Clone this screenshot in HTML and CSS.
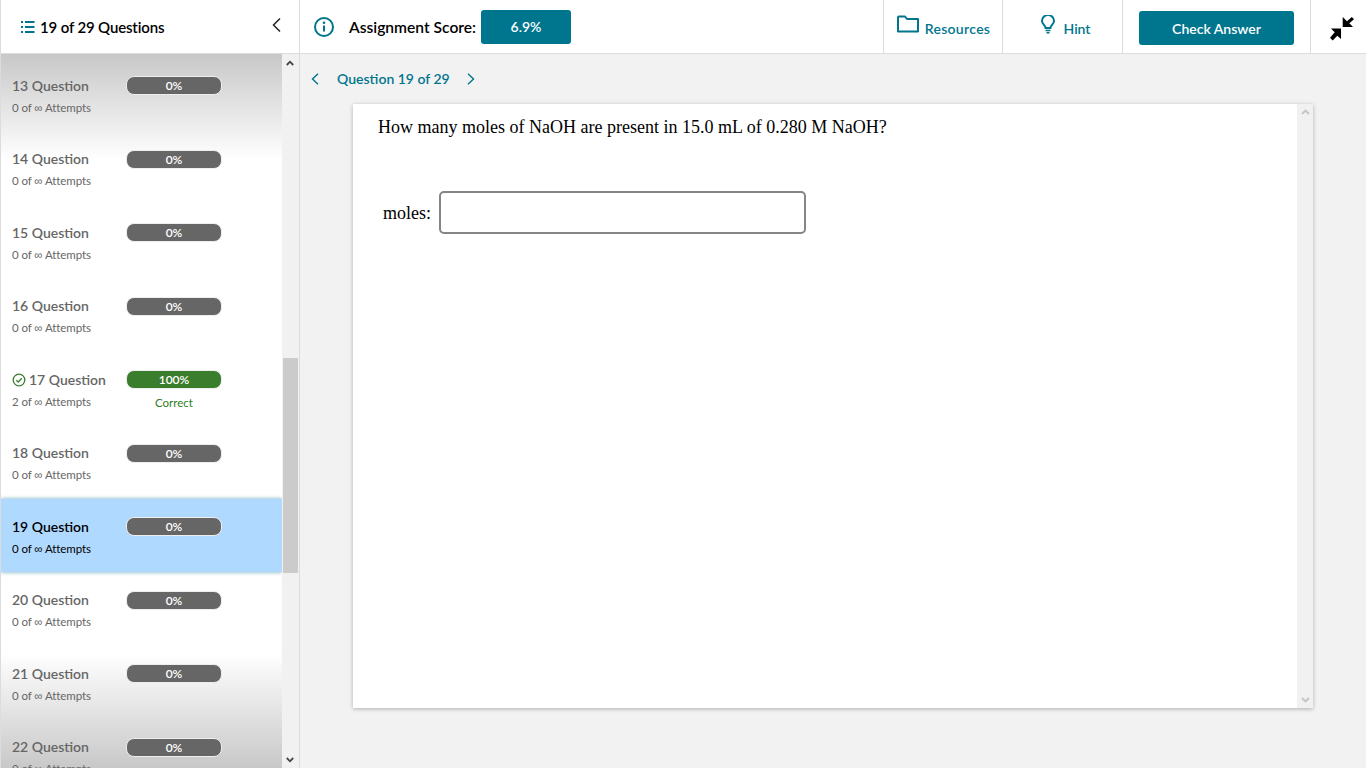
FILE: index.html
```html
<!DOCTYPE html>
<html lang="en">
<head>
<meta charset="utf-8">
<title>Question 19 of 29</title>
<link rel="stylesheet" href="styles.css">
</head>
<body>
<header class="topbar">
  <div class="head-left">
    <svg class="list-icon" width="14" height="12" viewBox="0 0 14 12"><path d="M0 1h2M4 1h9.500M0 6h2M4 6h9.500M0 11h2M4 11h9.500" stroke="#00758e" stroke-width="1.800" fill="none"/></svg>
    <span class="head-title">19 of 29 Questions</span>
    <svg class="collapse" width="10" height="16" viewBox="0 0 10 16"><path d="M8 1.500 1.500 8 8 14.500" stroke="#222" stroke-width="1.500" fill="none"/></svg>
  </div>
  <div class="head-score">
    <svg class="info" width="20" height="20" viewBox="0 0 20 20"><circle cx="10" cy="10" r="9" stroke="#00758e" stroke-width="2" fill="none"/><path d="M10 8.500v6" stroke="#00758e" stroke-width="2"/><circle cx="10" cy="5.700" r="1.300" fill="#00758e"/></svg>
    <span class="score-label">Assignment Score:</span>
    <span class="score-badge">6.9%</span>
  </div>
  <div class="head-tool tool-res">
    <svg width="22" height="18" viewBox="0 0 22 18"><path d="M1 16.500V2.500q0-1 1-1h6l2 2.500h11v12.500z" stroke="#00758e" stroke-width="2" fill="none" stroke-linejoin="round"/></svg>
    <span class="res-label">Resources</span>
  </div>
  <div class="head-tool tool-hint">
    <svg width="14" height="19" viewBox="0 0 14 19"><path d="M4.600 13c0-2.500-3.600-3.800-3.600-7a6 6 0 0 1 12 0c0 3.200-3.600 4.500-3.600 7z" stroke="#00758e" stroke-width="2" fill="none"/><path d="M4.500 15.500h5M5.500 17.800h3" stroke="#00758e" stroke-width="1.500"/></svg>
    <span>Hint</span>
  </div>
  <div class="head-check"><button class="check-btn">Check Answer</button></div>
  <div class="head-expand">
    <svg width="24" height="24" viewBox="0 0 24 24"><path d="M12.700 0v10H23l-3.700-3.700L24 2.200 21.800 0 17 4.300z" fill="#000"/><path d="M11 11.500H1l3.700 3.700L0 20.800 2.700 23.500 7.300 18.800 11 22z" fill="#000"/></svg>
  </div>
</header>
<div class="body">
  <aside class="sidebar">
    <div class="list">
      <div class="row"><div class="info-col"><div class="q">13 Question</div><div class="att">0 of <span class="inf">∞</span> Attempts</div></div><div class="bar-col"><div class="bar">0%</div></div></div>
      <div class="row"><div class="info-col"><div class="q">14 Question</div><div class="att">0 of <span class="inf">∞</span> Attempts</div></div><div class="bar-col"><div class="bar">0%</div></div></div>
      <div class="row"><div class="info-col"><div class="q">15 Question</div><div class="att">0 of <span class="inf">∞</span> Attempts</div></div><div class="bar-col"><div class="bar">0%</div></div></div>
      <div class="row"><div class="info-col"><div class="q">16 Question</div><div class="att">0 of <span class="inf">∞</span> Attempts</div></div><div class="bar-col"><div class="bar">0%</div></div></div>
      <div class="row"><div class="info-col"><div class="q"><svg class="tick" width="14" height="14" viewBox="0 0 14 14"><circle cx="7" cy="7" r="5.800" stroke="#3a7d2c" stroke-width="1.300" fill="none"/><path d="M4.300 7.200 6.200 9 9.800 5.300" stroke="#3a7d2c" stroke-width="1.300" fill="none"/></svg>17 Question</div><div class="att">2 of <span class="inf">∞</span> Attempts</div></div><div class="bar-col"><div class="bar bar-ok">100%</div><div class="correct">Correct</div></div></div>
      <div class="row"><div class="info-col"><div class="q">18 Question</div><div class="att">0 of <span class="inf">∞</span> Attempts</div></div><div class="bar-col"><div class="bar">0%</div></div></div>
      <div class="row row-active"><div class="info-col"><div class="q">19 Question</div><div class="att">0 of <span class="inf">∞</span> Attempts</div></div><div class="bar-col"><div class="bar">0%</div></div></div>
      <div class="row"><div class="info-col"><div class="q">20 Question</div><div class="att">0 of <span class="inf">∞</span> Attempts</div></div><div class="bar-col"><div class="bar">0%</div></div></div>
      <div class="row"><div class="info-col"><div class="q">21 Question</div><div class="att">0 of <span class="inf">∞</span> Attempts</div></div><div class="bar-col"><div class="bar">0%</div></div></div>
      <div class="row"><div class="info-col"><div class="q">22 Question</div><div class="att">0 of <span class="inf">∞</span> Attempts</div></div><div class="bar-col"><div class="bar">0%</div></div></div>
    </div>
    <div class="scroll">
      <svg class="arrow-up" width="8" height="6" viewBox="0 0 8 6"><path d="M.8 5 4 1.700 7.200 5" stroke="#444" stroke-width="1.800" fill="none"/></svg>
      <div class="thumb"></div>
      <svg class="arrow-down" width="8" height="6" viewBox="0 0 8 6"><path d="M.8 1 4 4.300 7.200 1" stroke="#444" stroke-width="1.800" fill="none"/></svg>
    </div>
  </aside>
  <main class="main">
    <nav class="qnav">
      <svg width="8" height="12" viewBox="0 0 8 12"><path d="M7 .8 1.500 6 7 11.200" stroke="#00758e" stroke-width="1.400" fill="none"/></svg>
      <span class="qnav-label">Question 19 of 29</span>
      <svg width="8" height="12" viewBox="0 0 8 12"><path d="M1 .8 6.500 6 1 11.200" stroke="#00758e" stroke-width="1.400" fill="none"/></svg>
    </nav>
    <section class="card">
      <div class="card-body">
        <p class="question">How many moles of NaOH are present in 15.0 mL of 0.280 M NaOH?</p>
        <div class="answer"><label class="answer-label">moles:</label><input class="answer-input" type="text"></div>
      </div>
      <div class="card-scroll">
        <svg width="9" height="6" viewBox="0 0 9 6"><path d="M1 5 4.500 1.500 8 5" stroke="#c4c4c4" stroke-width="1.800" fill="none"/></svg>
        <svg width="9" height="6" viewBox="0 0 9 6"><path d="M1 1 4.500 4.500 8 1" stroke="#c4c4c4" stroke-width="1.800" fill="none"/></svg>
      </div>
    </section>
  </main>
</div>
</body>
</html>
```
FILE: styles.css
```css
* { box-sizing: border-box; }
html, body { margin: 0; height: 100%; overflow: hidden; }
body { font-family: "Lato", "Noto Sans", sans-serif; background: #f2f2f2; color: #000; }

.topbar { display: flex; height: 54px; background: #fff; border-bottom: 1px solid #dcdcdc; }
.head-left { width: 300px; flex: none; display: flex; align-items: center; padding-left: 20px; border-right: 1px solid #dcdcdc; border-left: 1px solid #dcdcdc; }
.list-icon { margin-right: 5px; }
.head-title { font-size: 15px; font-weight: 600; letter-spacing: -0.15px; }
.collapse { margin-left: auto; margin-right: 17px; margin-top: -3px; }
.head-score { width: 583px; flex: none; display: flex; align-items: center; padding-left: 14px; }
.score-label { margin-left: 15px; font-size: 15.600px; font-weight: 600; }
.score-badge { margin-left: 5px; width: 90px; height: 34px; display: flex; align-items: center; justify-content: center; background: #00758e; color: #fff; border-radius: 3px; font-size: 14px; font-weight: 600; }
.head-tool { display: flex; align-items: center; justify-content: center; border-left: 1px solid #dcdcdc; color: #00758e; font-size: 14px; font-weight: 600; }
.head-tool span { margin-top: 4px; }
.tool-res { width: 119px; gap: 6px; padding-left: 1px; }
.res-label { letter-spacing: 0.3px; }
.tool-res svg { margin-top: -5px; }
.tool-hint { width: 120px; gap: 9px; padding-left: 6px; }
.tool-hint svg { margin-top: -5px; }
.head-check { width: 188px; flex: none; border-left: 1px solid #dcdcdc; padding: 11px 0 0 16px; }
.check-btn { display: block; width: 155px; height: 34px; padding: 0; border: 0; border-radius: 3px; background: #00758e; color: #fff; font: 600 14px "Lato", "Noto Sans", sans-serif; }
.head-expand { flex: 1; border-left: 1px solid #dcdcdc; display: flex; align-items: center; justify-content: center; padding-left: 7px; padding-top: 5px; }

.body { display: flex; height: 714px; }
.sidebar { position: relative; width: 300px; flex: none; background: #f1f1f1; border-left: 1px solid #dcdcdc; border-right: 1px solid #dcdcdc; overflow: hidden; }
.list { width: 281px; height: 100%; padding-top: 3.750px; overflow: hidden; background:
  linear-gradient(to bottom, #c8c8c8, #fff) top / 100% 106px no-repeat,
  linear-gradient(to top, #c8c8c8, #fff) bottom / 100% 115px no-repeat,
  #fff; }
.row { display: flex; height: 73.5px; padding: 18px 0 0 11px; color: #666; }
.row-active { background: #b0d9ff; color: #000; box-shadow: 0 0 4px rgba(0, 110, 130, .6); position: relative; }
.info-col { width: 114px; flex: none; }
.q { font-size: 14px; font-weight: 600; line-height: 20px; display: flex; align-items: center; white-space: nowrap; }
.tick { margin-right: 3px; }
.att { font-size: 11.500px; line-height: 14px; margin-top: 5px; letter-spacing: -0.1px; }
.inf { font-family: "Liberation Sans", sans-serif; font-size: 11.500px; letter-spacing: 0; }
.bar-col { width: 96px; flex: none; margin-top: .25px; }
.bar { height: 19px; border: 1px solid #eee; border-radius: 8px; background: #666; color: #fff; font-size: 12px; font-weight: 600; line-height: 17px; text-align: center; }
.bar-ok { background: #3a7d2c; }
.correct { color: #2e7d1e; font-size: 11.500px; line-height: 14px; margin-top: 7px; text-align: center; }

.scroll { position: absolute; top: 0; right: 0; width: 16px; height: 100%; }
.thumb { position: absolute; top: 304px; left: 0; width: 15px; height: 215px; background: #cbcbcb; }
.arrow-up { position: absolute; top: 6px; left: 3px; }
.arrow-down { position: absolute; bottom: 5px; left: 3px; }

.main { flex: 1; background: #f2f2f2; padding: 0 53px 0 53px; }
.qnav { height: 50px; display: flex; align-items: center; margin-left: -42px; padding-top: 1px; }
.qnav svg { margin-top: -1px; }
.qnav-label { margin: -2px 17px 0 18px; color: #00758e; font-size: 14px; font-weight: 600; }
.card { display: flex; height: 604px; background: #fff; box-shadow: 0 1px 4px rgba(0, 0, 0, .28); }
.card-body { flex: 1; padding: 13px 25px; font-family: "Liberation Serif", serif; font-size: 18px; }
.question { margin: 0; line-height: 21px; }
.answer { display: flex; align-items: center; margin-top: 53px; margin-left: 5px; }
.answer-label { margin-right: 8px; position: relative; top: 1px; }
.answer-input { width: 367px; height: 43px; border: 2px solid #858585; border-radius: 5px; background: #fff; padding: 0; }
.card-scroll { width: 16px; background: #f1f1f1; display: flex; flex-direction: column; justify-content: space-between; align-items: center; padding: 5px 0 5px; }
```
